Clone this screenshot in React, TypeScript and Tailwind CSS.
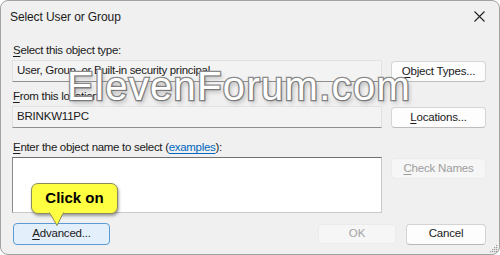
import React from 'react'

const font = { fontFamily: '"Liberation Sans", Arial, sans-serif' }

function Label({ k, rest }: { k: string; rest: React.ReactNode }) {
  return (
    <div className="h-[16px] mb-[2px] leading-[16px] text-[11.5px] tracking-[-0.3px] text-[#1a1a1a] pl-px">
      <span className="underline underline-offset-2">{k}</span>
      {rest}
    </div>
  )
}

function SideButton({ k, rest, disabled }: { k: string; rest: string; disabled?: boolean }) {
  return (
    <div
      className={
        'ml-auto mt-px w-[95px] h-[21px] rounded-[4px] border flex items-center justify-center text-[11.5px] tracking-[-0.2px] ' +
        (disabled
          ? 'bg-[#f6f6f6] border-[#ebebeb] text-[#9d9d9d]'
          : 'bg-[#fdfdfd] border-[#d5d5d5] border-b-[#bdbdbd] text-[#1a1a1a]')
      }
    >
      <span>
        <span className="underline underline-offset-2">{k}</span>
        {rest}
      </span>
    </div>
  )
}

export default function App() {
  return (
    <div className="w-[500px] h-[255px] bg-white relative overflow-hidden" style={font}>
      <div className="h-full border border-[#a3a3a3] rounded-[8px] bg-[#f0f0f0] flex flex-col">
        {/* title bar */}
        <div className="h-[31px] flex items-center justify-between pl-[9px] pr-[12px]">
          <span className="text-[12px] tracking-[-0.1px] text-[#1b1b1b]">Select User or Group</span>
          <svg width="11" height="11" viewBox="0 0 11 11" className="mr-[2px]">
            <path d="M0.5 0.5 L10.5 10.5 M10.5 0.5 L0.5 10.5" stroke="#222" strokeWidth="1.1" />
          </svg>
        </div>

        <div className="flex flex-col pl-[11px] pr-[13px]">
          <div className="mt-[10px]">
            <Label k="S" rest="elect this object type:" />
            <div className="flex">
              <div className="w-[370px] h-[22px] bg-[#f3f3f3] border border-[#e2e2e2] border-b-[#8f8f8f] flex items-center pl-[4px] text-[11.5px] tracking-[-0.3px] text-[#1a1a1a]">
                User, Group, or Built-in security principal
              </div>
              <SideButton k="O" rest="bject Types..." />
            </div>
          </div>

          <div className="mt-[6px]">
            <Label k="F" rest="rom this location:" />
            <div className="flex">
              <div className="w-[370px] h-[22px] bg-[#f3f3f3] border border-[#e2e2e2] border-b-[#8f8f8f] flex items-center pl-[4px] text-[11.5px] tracking-[-0.2px] text-[#1a1a1a]">
                BRINKW11PC
              </div>
              <SideButton k="L" rest="ocations..." />
            </div>
          </div>

          <div className="mt-[11px]">
            <Label
              k="E"
              rest={
                <>
                  nter the object name to select (
                  <span className="text-[#0067c0] underline underline-offset-2">examples</span>):
                </>
              }
            />
            <div className="flex">
              <div className="w-[370px] h-[56px] bg-white border border-[#c9c9c9] border-t-[#6f6f6f] border-l-[#8a8a8a]" />
              <SideButton k="C" rest="heck Names" disabled />
            </div>
          </div>

          {/* bottom buttons */}
          <div className="mt-[10px] flex items-center">
            <div className="ml-[1px] w-[97px] h-[22px] rounded-[4px] border border-[#5b9bd5] bg-[#e3effa] flex items-center justify-center text-[11.5px] tracking-[-0.2px] text-[#1a1a1a]">
              <span>
                <span className="underline underline-offset-2">A</span>dvanced...
              </span>
            </div>
            <div className="ml-auto w-[78px] h-[20px] rounded-[4px] border border-[#ebebeb] bg-[#f6f6f6] flex items-center justify-center text-[11.5px] text-[#a3a3a3]">
              OK
            </div>
            <div className="ml-[10px] w-[80px] h-[21px] rounded-[4px] border border-[#d3d3d3] border-b-[#b8b8b8] bg-[#fdfdfd] flex items-center justify-center text-[11.5px] tracking-[-0.2px] text-[#1a1a1a]">
              Cancel
            </div>
          </div>
        </div>
      </div>

      {/* resize grip */}
      <svg width="8" height="8" viewBox="0 0 8 8" className="absolute right-[2px] bottom-[2px]">
        {[
          [6, 1],
          [4, 3],
          [6, 3],
          [2, 5],
          [4, 5],
          [6, 5],
          [0, 7],
          [2, 7],
          [4, 7],
          [6, 7],
        ].map(([x, y], i) => (
          <rect key={i} x={x} y={y - 1} width="1.2" height="1.2" fill="#9a9a9a" />
        ))}
      </svg>

      {/* watermark */}
      <div
        className="absolute left-[67px] top-[66px] text-[40px] leading-none tracking-[1.3px] text-white pointer-events-none [-webkit-text-stroke:2.6px_#8c8c8c] [paint-order:stroke_fill] [text-shadow:2px_3px_4px_rgba(0,0,0,0.25)]"
        style={{ fontFamily: '"Liberation Sans", Arial, sans-serif' }}
      >
        ElevenForum.com
      </div>

      {/* callout */}
      <div className="absolute left-[31px] top-[183px] w-[87px] h-[31px] rounded-[7px] bg-[#ffff42] border border-[#8a8a5a] shadow-[1px_2px_3px_rgba(0,0,0,0.35)] flex items-center justify-center">
        <span className="text-[15px] font-bold text-black" style={{ fontFamily: '"Liberation Sans", Arial, sans-serif' }}>
          Click on
        </span>
      </div>
      <svg width="16" height="15" viewBox="0 0 16 15" className="absolute left-[49px] top-[212px]">
        <path d="M0.5 0.5 L8 13.5 L14.5 0.5" fill="#ffff42" stroke="#8a8a5a" strokeWidth="1" />
        <rect x="1.5" y="0" width="12" height="2" fill="#ffff42" />
      </svg>
    </div>
  )
}
